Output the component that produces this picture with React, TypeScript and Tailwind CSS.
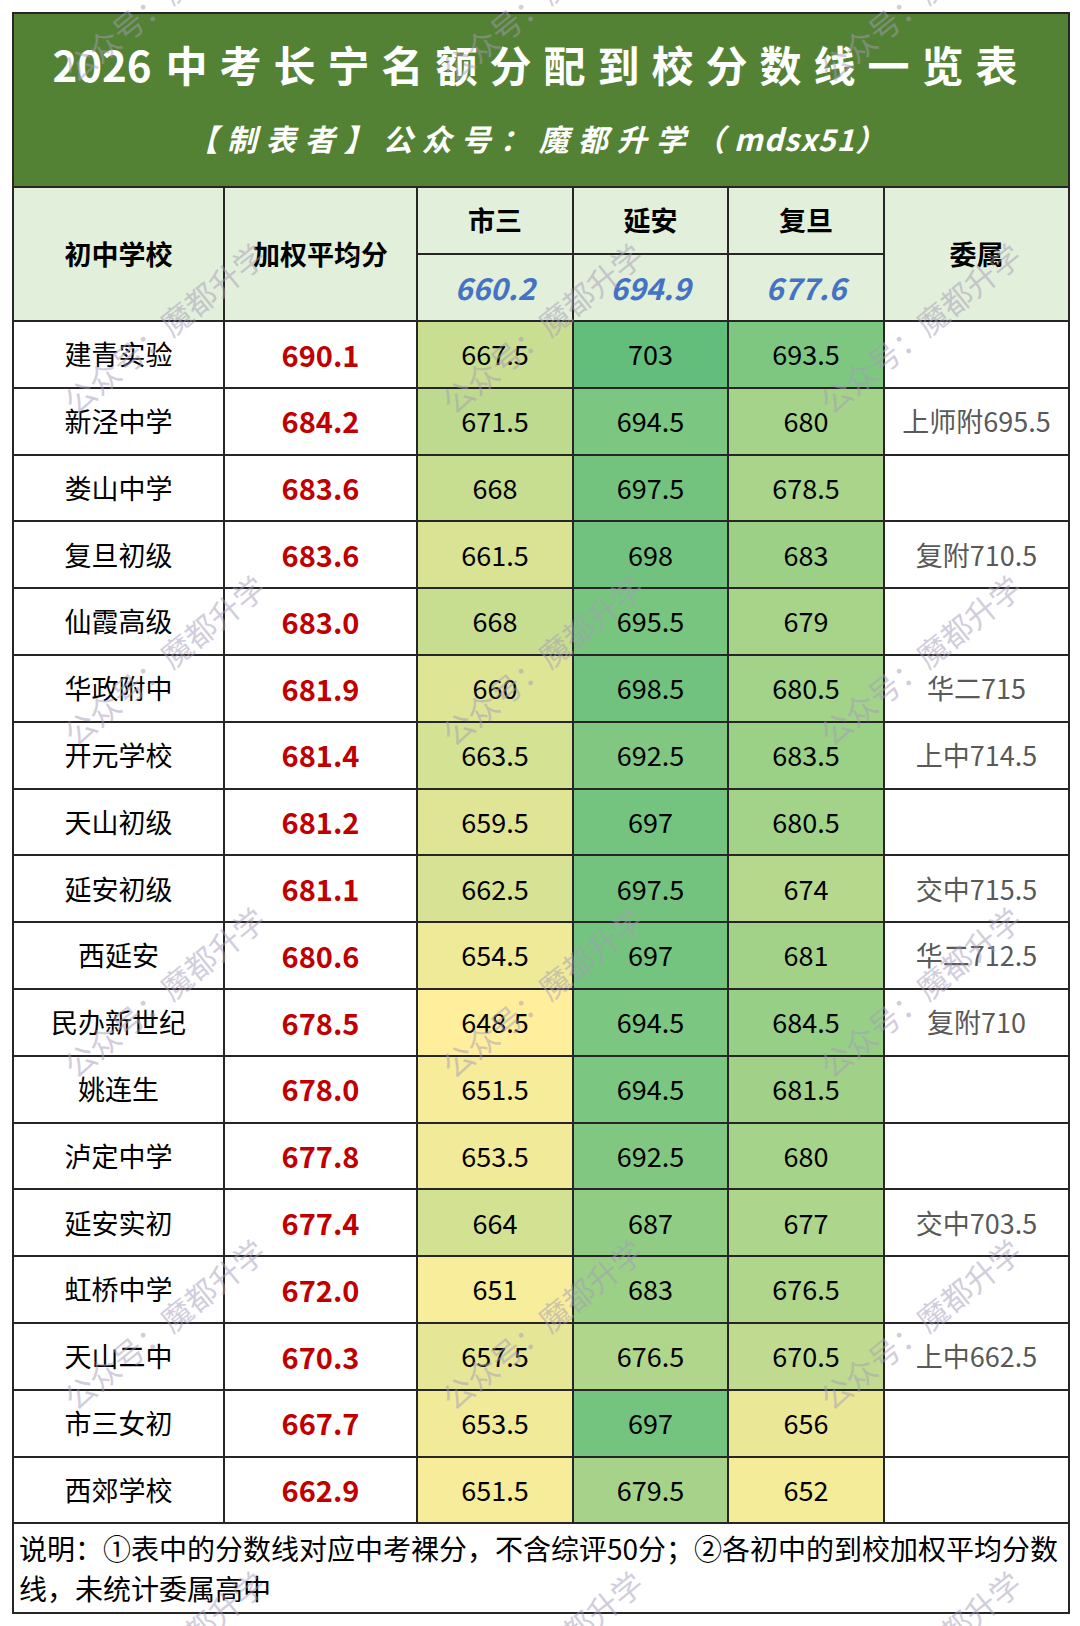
import React from "react"

// 2026 长宁名额分配到校分数线 — 表格数据
const ROWS = [
  { name: "建青实验", avg: "690.1", s3: "667.5", ya: "703", fd: "693.5", wei: "" },
  { name: "新泾中学", avg: "684.2", s3: "671.5", ya: "694.5", fd: "680", wei: "上师附695.5" },
  { name: "娄山中学", avg: "683.6", s3: "668", ya: "697.5", fd: "678.5", wei: "" },
  { name: "复旦初级", avg: "683.6", s3: "661.5", ya: "698", fd: "683", wei: "复附710.5" },
  { name: "仙霞高级", avg: "683.0", s3: "668", ya: "695.5", fd: "679", wei: "" },
  { name: "华政附中", avg: "681.9", s3: "660", ya: "698.5", fd: "680.5", wei: "华二715" },
  { name: "开元学校", avg: "681.4", s3: "663.5", ya: "692.5", fd: "683.5", wei: "上中714.5" },
  { name: "天山初级", avg: "681.2", s3: "659.5", ya: "697", fd: "680.5", wei: "" },
  { name: "延安初级", avg: "681.1", s3: "662.5", ya: "697.5", fd: "674", wei: "交中715.5" },
  { name: "西延安", avg: "680.6", s3: "654.5", ya: "697", fd: "681", wei: "华二712.5" },
  { name: "民办新世纪", avg: "678.5", s3: "648.5", ya: "694.5", fd: "684.5", wei: "复附710" },
  { name: "姚连生", avg: "678.0", s3: "651.5", ya: "694.5", fd: "681.5", wei: "" },
  { name: "泸定中学", avg: "677.8", s3: "653.5", ya: "692.5", fd: "680", wei: "" },
  { name: "延安实初", avg: "677.4", s3: "664", ya: "687", fd: "677", wei: "交中703.5" },
  { name: "虹桥中学", avg: "672.0", s3: "651", ya: "683", fd: "676.5", wei: "" },
  { name: "天山二中", avg: "670.3", s3: "657.5", ya: "676.5", fd: "670.5", wei: "上中662.5" },
  { name: "市三女初", avg: "667.7", s3: "653.5", ya: "697", fd: "656", wei: "" },
  { name: "西郊学校", avg: "662.9", s3: "651.5", ya: "679.5", fd: "652", wei: "" },
]

// Excel style green-yellow colour scale over all three school columns
const ALL = ROWS.flatMap((r) => [r.s3, r.ya, r.fd].map(Number))
const MIN = Math.min(...ALL)
const MAX = Math.max(...ALL)

function scaleColor(v: string) {
  const t = (Number(v) - MIN) / (MAX - MIN)
  const lo = [255, 239, 156]
  const hi = [99, 190, 123]
  const c = lo.map((a, i) => Math.round(a + (hi[i] - a) * t))
  return `rgb(${c[0]}, ${c[1]}, ${c[2]})`
}

const cell = "border-2 border-[#262626] text-center align-middle p-0"

function Watermarks() {
  const xs = [164, 542, 920]
  const ys = [-4, 328, 660, 992, 1324, 1656]
  return (
    <div className="absolute inset-0 overflow-hidden pointer-events-none">
      {ys.flatMap((y) =>
        xs.map((x) => (
          <span
            key={`${x}-${y}`}
            className="absolute -translate-x-1/2 -translate-y-1/2 -rotate-[39deg] whitespace-nowrap text-[31px] text-[rgba(165,155,185,0.5)]"
            style={{ left: x, top: y }}
          >
            公众号：魔都升学
          </span>
        ))
      )}
    </div>
  )
}

export default function App() {
  return (
    <div className="relative w-[1080px] h-[1626px] bg-white pt-[12px] pl-[12px] font-['Noto_Sans_CJK_SC',sans-serif] text-black">
      <table className="border-collapse table-fixed w-[1056px]">
        <colgroup>
          <col className="w-[211px]" />
          <col className="w-[193px]" />
          <col className="w-[156px]" />
          <col className="w-[155px]" />
          <col className="w-[156px]" />
          <col className="w-[185px]" />
        </colgroup>
        <tbody>
          <tr className="h-[174px]">
            <td colSpan={6} className={`${cell} bg-[#548235] text-white`}>
              <div className="flex flex-col items-center gap-[38px] -mt-[4px]">
                <div className="text-[42px] font-bold leading-none whitespace-nowrap">
                  2026<span className="ml-[14px] tracking-[12px]">中考长宁名额分配到校分数线一览表</span>
                </div>
                <div className="text-[30px] font-bold italic leading-none whitespace-nowrap tracking-[9px]">
                  【制表者】公众号：魔都升学（<span className="tracking-[1px]">mdsx51</span>）
                </div>
              </div>
            </td>
          </tr>
          <tr className="h-[67px] bg-[#E2EFDA]">
            <td rowSpan={2} className={`${cell} text-[27px] font-bold`}>初中学校</td>
            <td rowSpan={2} className={`${cell} text-[27px] font-bold`}>加权平均分</td>
            <td className={`${cell} text-[27px] font-bold`}>市三</td>
            <td className={`${cell} text-[27px] font-bold`}>延安</td>
            <td className={`${cell} text-[27px] font-bold`}>复旦</td>
            <td rowSpan={2} className={`${cell} text-[27px] font-bold`}>委属</td>
          </tr>
          <tr className="h-[67px] bg-[#E2EFDA]">
            {["660.2", "694.9", "677.6"].map((v) => (
              <td key={v} className={`${cell} text-[30px] font-bold italic text-[#4472C4]`}>
                {v}
              </td>
            ))}
          </tr>
          {ROWS.map((r) => (
            <tr key={r.name} className="h-[66.8px] bg-white">
              <td className={`${cell} text-[27px]`}>{r.name}</td>
              <td className={`${cell} text-[29px] font-bold text-[#C00000]`}>{r.avg}</td>
              {[r.s3, r.ya, r.fd].map((v, i) => (
                <td key={i} className={`${cell} text-[27px]`} style={{ background: scaleColor(v) }}>
                  {v}
                </td>
              ))}
              <td className={`${cell} text-[27px] text-[#595959]`}>{r.wei}</td>
            </tr>
          ))}
          <tr className="h-[90px] bg-white">
            <td colSpan={6} className={`${cell} text-left px-[5px] text-[28px] leading-[40px]`}>
              说明：①表中的分数线对应中考裸分，不含综评50分；②各初中的到校加权平均分数
              <br />
              线，未统计委属高中
            </td>
          </tr>
        </tbody>
      </table>
      <Watermarks />
    </div>
  )
}
